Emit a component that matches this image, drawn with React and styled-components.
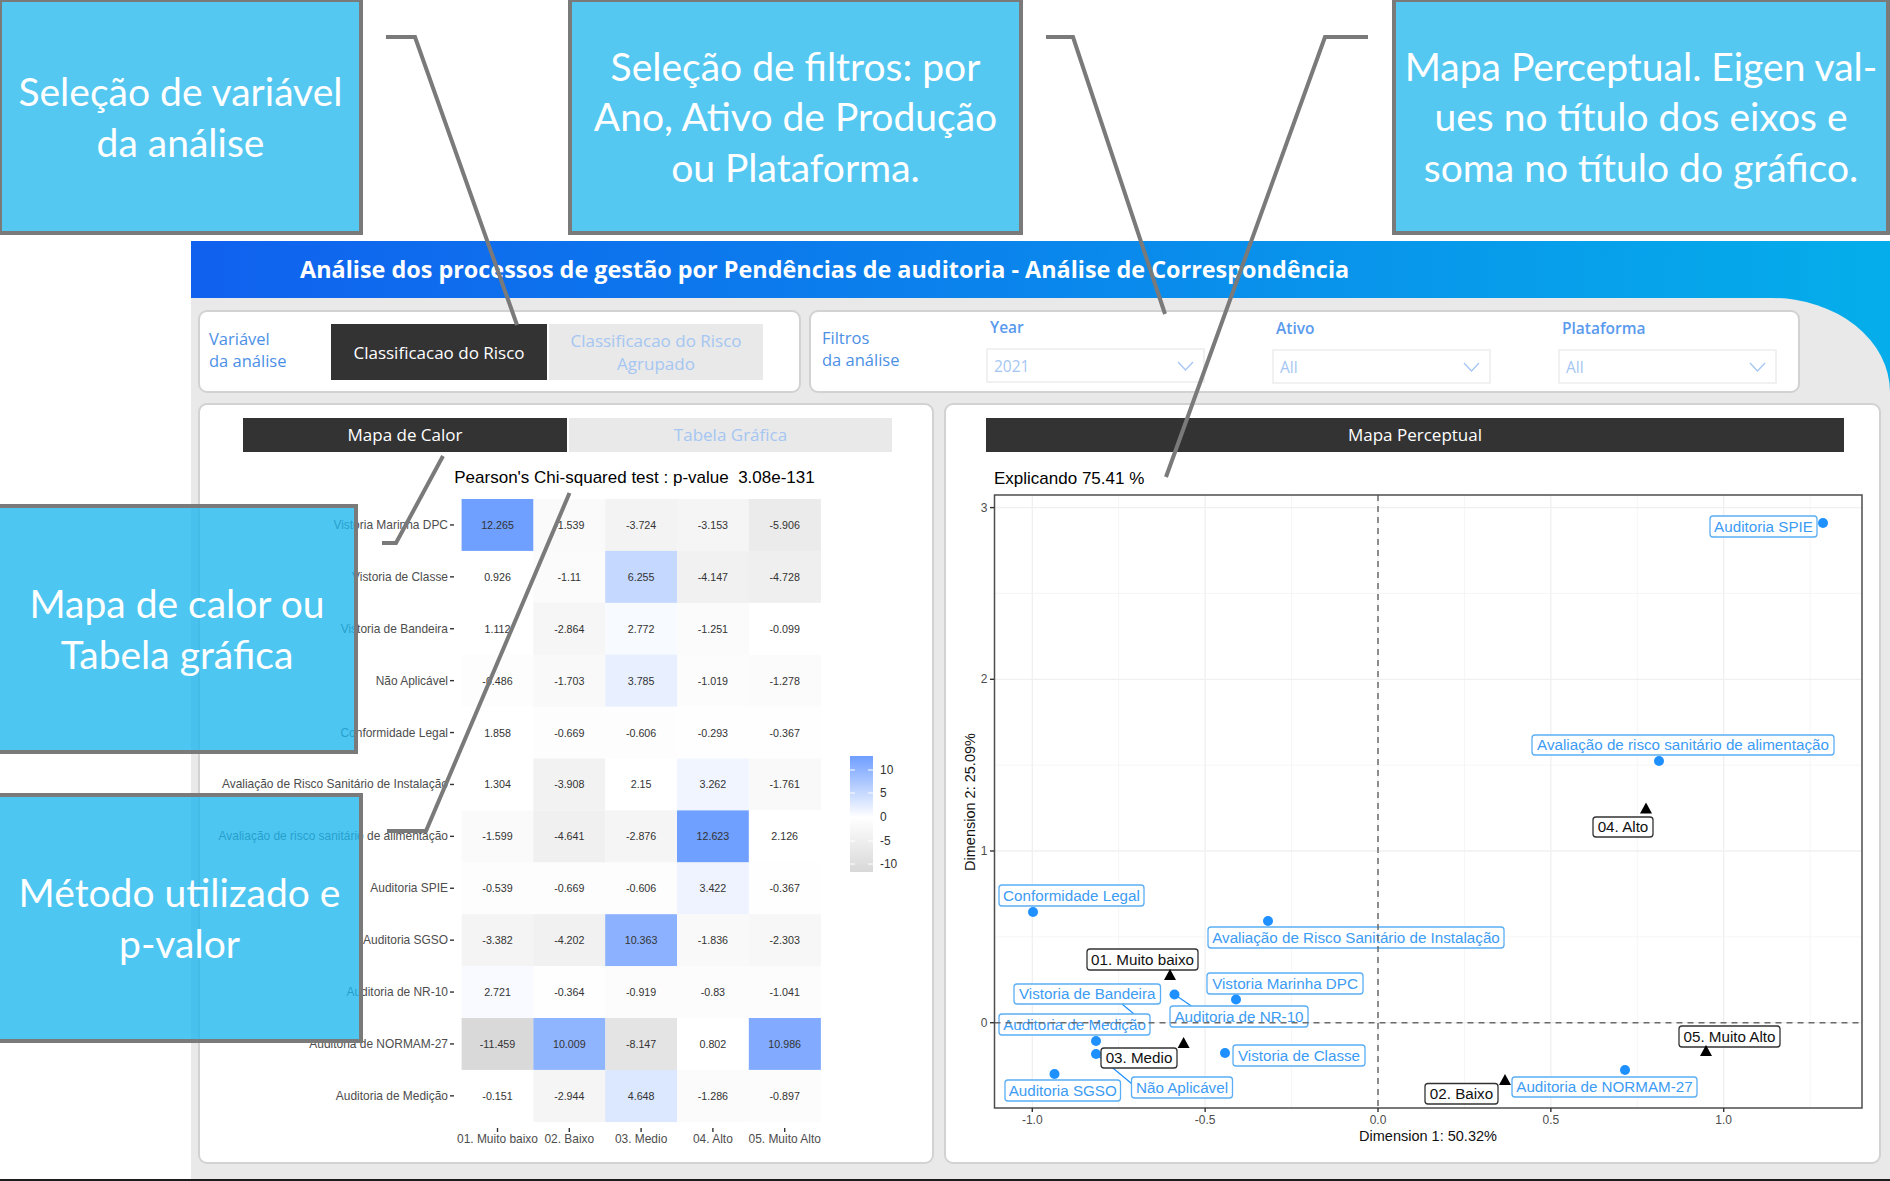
import React from "react";
import styled, { createGlobalStyle } from "styled-components";

const Global = createGlobalStyle`
  html, body { margin: 0; padding: 0; background: #fff; }
  * { box-sizing: border-box; }
  body { font-family: "Open Sans", "Liberation Sans", sans-serif; }
`;

const Page = styled.div`
  position: relative;
  width: 1890px;
  height: 1181px;
  overflow: hidden;
  display: flex;
  flex-direction: column;
  background: #fff;
  border-bottom: 2px solid #1c1c1c;
`;

const TopBand = styled.div`
  display: flex;
  align-items: flex-start;
  height: 241px;
  flex: none;
`;

const Callout = styled.div`
  width: ${(p) => p.$w}px;
  height: ${(p) => p.$h}px;
  margin-left: ${(p) => p.$ml || 0}px;
  margin-top: -2px;
  flex: none;
  display: flex;
  align-items: center;
  justify-content: center;
  text-align: center;
  background: #55c8f2;
  border: 4px solid #7a7a7a;
  color: #fff;
  font-family: Lato, "Liberation Sans", sans-serif;
  font-size: 39px;
  line-height: 50.6px;
`;

const FloatingCallout = styled(Callout)`
  position: absolute;
  z-index: 3;
  left: -4px;
  top: ${(p) => p.$top}px;
  margin: 0;
  background: rgba(28, 182, 238, 0.78);
`;

const Dashboard = styled.div`
  margin-left: 191px;
  flex: 1;
  display: flex;
  flex-direction: column;
  background: linear-gradient(90deg, #1061ee 0%, #0a86ec 50%, #05aeea 100%);
`;

const Header = styled.header`
  height: 57px;
  flex: none;
  display: flex;
  align-items: center;
  padding: 0 0 2px 109px;
  color: #fff;
  font-size: 23.4px;
  font-weight: 700;
`;

const Body = styled.main`
  flex: 1;
  background: #e9e9ea;
  border-top-right-radius: 118px 94px;
  padding: 12px 9px 0 7px;
  display: flex;
  flex-direction: column;
  gap: 10px;
`;

const Row = styled.div`
  display: flex;
  gap: ${(p) => p.$gap}px;
  height: ${(p) => p.$h}px;
  flex: none;
`;

const Card = styled.section`
  width: ${(p) => p.$w}px;
  flex: none;
  background: #fff;
  border: 2px solid #d2d2d2;
  border-radius: 9px;
`;

const ControlCard = styled(Card)`
  position: relative;
  display: flex;
  align-items: flex-start;
`;

const SideLabel = styled.div`
  width: ${(p) => p.$w}px;
  flex: none;
  margin-top: ${(p) => p.$mt}px;
  padding-left: ${(p) => p.$pl}px;
  color: #4c90e6;
  font-size: 16.5px;
  line-height: 22px;
`;

const Choice = styled.div`
  width: ${(p) => p.$w}px;
  height: 56px;
  flex: none;
  margin: 12px ${(p) => p.$mr || 0}px 0 0;
  display: flex;
  align-items: center;
  justify-content: center;
  text-align: center;
  font-size: 17px;
  line-height: 23px;
  background: ${(p) => (p.$active ? "#333" : "#e9e9e9")};
  color: ${(p) => (p.$active ? "#fff" : "#a5c6f2")};
`;

const Filters = styled.div`
  display: flex;
  gap: 67px;
`;

const Field = styled.div`
  width: 219px;
  margin-top: ${(p) => p.$mt}px;
`;

const FieldLabel = styled.div`
  padding-left: 4px;
  color: #5a9aee;
  font-size: 15.5px;
  font-weight: 600;
  line-height: 22px;
  height: 32px;
`;

const Select = styled.div`
  height: 35px;
  border: 2px solid #f1f1f1;
  padding: 0 9px 0 6px;
  display: flex;
  align-items: center;
  justify-content: space-between;
  color: #a5c6f2;
  font-size: 15.5px;
  svg { display: block; }
`;

const Panel = styled(Card)`
  padding: 13px 0 0 ${(p) => p.$pl}px;
`;

const TabRow = styled.div`
  display: flex;
  gap: 2px;
  height: 34px;
`;

const Tab = styled.div`
  width: ${(p) => p.$w}px;
  flex: none;
  display: flex;
  align-items: center;
  justify-content: center;
  padding-bottom: 2px;
  font-size: 17px;
  background: ${(p) => (p.$active ? "#333" : "#e9e9e9")};
  color: ${(p) => (p.$active ? "#fff" : "#a5c6f2")};
`;

const ChartFrame = styled.div`
  margin-left: ${(p) => -p.$pl}px;
  svg { display: block; }
`;

const Overlay = styled.svg`
  position: absolute;
  inset: 0;
  z-index: 2;
  pointer-events: none;
`;

const Connector = styled.polyline`
  fill: none;
  stroke: #7a7a7a;
  stroke-width: 4;
`;

const ChartText = styled.text`
  font-family: "Liberation Sans", Arial, sans-serif;
  font-size: ${(p) => p.$fs}px;
  fill: ${(p) => p.$c || "#4d4d4d"};
  text-anchor: ${(p) => p.$a || "middle"};
  white-space: pre;
`;

const Tick = styled.line`
  stroke: #333;
  stroke-width: 1.4;
`;

const GridLine = styled.line`
  stroke: #f0f0f0;
  stroke-width: ${(p) => (p.$minor ? 0.7 : 1.3)};
`;

const ZeroLine = styled.line`
  stroke: #6b6b6b;
  stroke-width: 1.5;
  stroke-dasharray: 6 5;
`;

const LabelBox = styled.rect`
  fill: #fff;
  rx: 3px;
  stroke: ${(p) => (p.$dark ? "#333" : "#5aaef5")};
  stroke-width: 1.3;
`;

const Dot = styled.circle`
  fill: #1e90ff;
`;

const Marker = styled.polygon`
  fill: #000;
`;

const Leader = styled.line`
  stroke: #1e90ff;
  stroke-width: 1.2;
`;

const PlotFrame = styled.rect`
  fill: none;
  stroke: #4d4d4d;
  stroke-width: 1.5;
`;

const rows = [
  ["Vistoria Marinha DPC", [12.265, -1.539, -3.724, -3.153, -5.906]],
  ["Vistoria de Classe", [0.926, -1.11, 6.255, -4.147, -4.728]],
  ["Vistoria de Bandeira", [1.112, -2.864, 2.772, -1.251, -0.099]],
  ["Não Aplicável", [-0.486, -1.703, 3.785, -1.019, -1.278]],
  ["Conformidade Legal", [1.858, -0.669, -0.606, -0.293, -0.367]],
  ["Avaliação de Risco Sanitário de Instalação", [1.304, -3.908, 2.15, 3.262, -1.761]],
  ["Avaliação de risco sanitário de alimentação", [-1.599, -4.641, -2.876, 12.623, 2.126]],
  ["Auditoria SPIE", [-0.539, -0.669, -0.606, 3.422, -0.367]],
  ["Auditoria SGSO", [-3.382, -4.202, 10.363, -1.836, -2.303]],
  ["Auditoria de NR-10", [2.721, -0.364, -0.919, -0.83, -1.041]],
  ["Auditoria de NORMAM-27", [-11.459, 10.009, -8.147, 0.802, 10.986]],
  ["Auditoria de Medição", [-0.151, -2.944, 4.648, -1.286, -0.897]],
];
const cols = ["01. Muito baixo", "02. Baixo", "03. Medio", "04. Alto", "05. Muito Alto"];

const mix = (a, b, t) => a.map((v, i) => Math.round(v + (b[i] - v) * t));
const heat = (v) => {
  const c =
    v >= 0
      ? mix([255, 255, 255], [111, 159, 255], Math.max(0, Math.min(1, (v - 2.2) / 10.1)))
      : mix([255, 255, 255], [217, 217, 217], Math.min(1, -v / 11.5));
  return `rgb(${c.join(",")})`;
};

const CX = 461.6;
const CY = 499;
const CW = 71.8;
const CH = 51.9;

function HeatChart() {
  return (
    <svg width="732" height="711" viewBox="200 452 732 711">
      <ChartText x={634.5} y={483} $fs={17} $c="#000">Pearson's Chi-squared test : p-value  3.08e-131</ChartText>
      {rows.map(([name, vals], r) => {
        const my = CY + CH * (r + 0.5);
        return (
          <g key={name}>
            <ChartText x={448} y={my + 4} $fs={11.95} $a="end">{name}</ChartText>
            <Tick x1={450} x2={454} y1={my} y2={my} />
            {vals.map((v, c) => (
              <g key={c}>
                <rect x={CX + CW * c} y={CY + CH * r} width={CW + 0.3} height={CH + 0.3} fill={heat(v)} />
                <ChartText x={CX + CW * (c + 0.5)} y={my + 4} $fs={10.7} $c="#333">{v}</ChartText>
              </g>
            ))}
          </g>
        );
      })}
      {cols.map((n, c) => (
        <g key={n}>
          <Tick x1={CX + CW * (c + 0.5)} x2={CX + CW * (c + 0.5)} y1={1128} y2={1132} />
          <ChartText x={CX + CW * (c + 0.5)} y={1143} $fs={11.95}>{n}</ChartText>
        </g>
      ))}
      <defs>
        <linearGradient id="legendFill" x1="0" x2="0" y1="0" y2="1">
          <stop offset="0" stopColor="#6f9eff" />
          <stop offset="0.53" stopColor="#ffffff" />
          <stop offset="1" stopColor="#d8d8d8" />
        </linearGradient>
      </defs>
      <rect x={850} y={756} width={23} height={116} fill="url(#legendFill)" />
      {[[770, "10"], [793, "5"], [817, "0"], [841, "-5"], [864, "-10"]].map(([y, t]) => (
        <g key={t}>
          <line x1={850} x2={855} y1={y} y2={y} stroke="#fff" />
          <line x1={868} x2={873} y1={y} y2={y} stroke="#fff" />
          <ChartText x={880} y={y + 4} $fs={11.95} $a="start" $c="#333">{t}</ChartText>
        </g>
      ))}
    </svg>
  );
}

const px = (v) => 1378 + 345.7 * v;
const py = (v) => 1022.7 - 171.7 * v;

const blueLabels = [
  ["Auditoria SPIE", 1710, 516, 107, 21],
  ["Avaliação de risco sanitário de alimentação", 1532, 735, 302, 20],
  ["Conformidade Legal", 999, 885, 145, 21],
  ["Avaliação de Risco Sanitário de Instalação", 1208, 927, 296, 21],
  ["Vistoria Marinha DPC", 1207, 973, 156, 21],
  ["Vistoria de Bandeira", 1014, 984, 146.5, 20],
  ["Auditoria de NR-10", 1170, 1006, 138, 21],
  ["Auditoria de Medição", 999, 1014, 151, 21],
  ["Vistoria de Classe", 1233, 1045, 132, 21],
  ["Auditoria SGSO", 1005, 1080, 115.5, 21],
  ["Não Aplicável", 1131.5, 1077, 101, 21],
  ["Auditoria de NORMAM-27", 1512, 1077, 185, 20],
];
const darkLabels = [
  ["04. Alto", 1593, 817, 60, 20],
  ["01. Muito baixo", 1087, 949, 111, 21],
  ["03. Medio", 1101, 1048, 76, 20],
  ["05. Muito Alto", 1679, 1026, 101, 21],
  ["02. Baixo", 1425, 1083.5, 73, 20.5],
];
const dots = [
  [1823, 523], [1659, 761], [1033, 912], [1268, 921], [1236, 999.5], [1174.5, 994.5],
  [1096, 1041], [1096, 1054], [1225, 1053], [1054.5, 1074], [1625, 1070],
];
const triangles = [[1646, 808.6], [1170, 975], [1183.6, 1043], [1706, 1051], [1505, 1080]];
const leaders = [
  [1174.5, 994.5, 1191.4, 1006],
  [1122, 1004, 1134, 1014],
  [1096, 1054, 1131.5, 1083.5],
];

function PerceptualChart() {
  const majorX = [-1, -0.5, 0, 0.5, 1];
  const minorX = [-0.75, -0.25, 0.25, 0.75, 1.25];
  const majorY = [0, 1, 2, 3];
  const minorY = [0.5, 1.5, 2.5];
  return (
    <svg width="933" height="711" viewBox="946 452 933 711">
      <ChartText x={994} y={484} $fs={17} $a="start" $c="#000">Explicando 75.41 %</ChartText>
      {minorX.map((v) => <GridLine key={v} $minor x1={px(v)} x2={px(v)} y1={495} y2={1108} />)}
      {minorY.map((v) => <GridLine key={v} $minor x1={994.5} x2={1862} y1={py(v)} y2={py(v)} />)}
      {majorX.map((v) => <GridLine key={v} x1={px(v)} x2={px(v)} y1={495} y2={1108} />)}
      {majorY.map((v) => <GridLine key={v} x1={994.5} x2={1862} y1={py(v)} y2={py(v)} />)}
      {leaders.map(([a, b, c, d]) => <Leader key={a + b} x1={a} y1={b} x2={c} y2={d} />)}
      {blueLabels.map(([t, x, y, w, h]) => (
        <g key={t}>
          <LabelBox x={x} y={y} width={w} height={h} />
          <ChartText x={x + w / 2} y={y + h / 2 + 5.2} $fs={15.2} $c="#3c9bf3">{t}</ChartText>
        </g>
      ))}
      {dots.map(([x, y]) => <Dot key={x + "-" + y} cx={x} cy={y} r={5} />)}
      {darkLabels.map(([t, x, y, w, h]) => (
        <g key={t}>
          <LabelBox $dark x={x} y={y} width={w} height={h} />
          <ChartText x={x + w / 2} y={y + h / 2 + 5.2} $fs={15.2} $c="#111">{t}</ChartText>
        </g>
      ))}
      {triangles.map(([x, y]) => <Marker key={x} points={`${x - 6},${y + 5} ${x + 6},${y + 5} ${x},${y - 6}`} />)}
      <ZeroLine x1={px(0)} x2={px(0)} y1={495} y2={1108} />
      <ZeroLine x1={994.5} x2={1862} y1={py(0)} y2={py(0)} />
      <PlotFrame x={994.5} y={495} width={867.5} height={613} />
      {majorX.map((v) => (
        <g key={v}>
          <Tick x1={px(v)} x2={px(v)} y1={1108} y2={1112} />
          <ChartText x={px(v)} y={1124} $fs={12}>{v.toFixed(1)}</ChartText>
        </g>
      ))}
      {majorY.map((v) => (
        <g key={v}>
          <Tick x1={990} x2={994} y1={py(v)} y2={py(v)} />
          <ChartText x={987.5} y={py(v) + 4} $fs={12} $a="end">{v}</ChartText>
        </g>
      ))}
      <ChartText x={1428} y={1141} $fs={14.5} $c="#111">Dimension 1: 50.32%</ChartText>
      <ChartText x={0} y={0} $fs={14.5} $c="#111" transform="translate(975 802) rotate(-90)">Dimension 2: 25.09%</ChartText>
    </svg>
  );
}

const Chevron = () => (
  <svg width="17" height="10" viewBox="0 0 17 10" aria-hidden="true">
    <polyline points="1,1 8.5,9 16,1" fill="none" stroke="#a5c6f2" strokeWidth="1.3" />
  </svg>
);

export default function App() {
  return (
    <>
      <Global />
      <Page>
        <TopBand>
          <Callout $w={365} $h={237} $ml={-2}>
            <span>Seleção de variável<br />da análise</span>
          </Callout>
          <Callout $w={455} $h={237} $ml={205}>
            <span>Seleção de filtros: por<br />Ano, Ativo de Produção<br />ou Plataforma.</span>
          </Callout>
          <Callout $w={498} $h={237} $ml={369}>
            <span>Mapa Perceptual. Eigen val-<br />ues no título dos eixos e<br />soma no título do gráfico.</span>
          </Callout>
        </TopBand>
        <Dashboard>
          <Header>Análise dos processos de gestão por Pendências de auditoria - Análise de Correspondência</Header>
          <Body>
            <Row $gap={8} $h={83}>
              <ControlCard $w={603}>
                <SideLabel $w={131} $mt={16} $pl={9}>Variável<br />da análise</SideLabel>
                <Choice $w={216} $mr={2} $active>Classificacao do Risco</Choice>
                <Choice $w={214}>Classificacao do Risco<br />Agrupado</Choice>
              </ControlCard>
              <ControlCard $w={991}>
                <SideLabel $w={175} $mt={15} $pl={11}>Filtros<br />da análise</SideLabel>
                <Filters>
                  <Field $mt={4}>
                    <FieldLabel>Year</FieldLabel>
                    <Select>2021<Chevron /></Select>
                  </Field>
                  <Field $mt={5}>
                    <FieldLabel>Ativo</FieldLabel>
                    <Select>All<Chevron /></Select>
                  </Field>
                  <Field $mt={5}>
                    <FieldLabel>Plataforma</FieldLabel>
                    <Select>All<Chevron /></Select>
                  </Field>
                </Filters>
              </ControlCard>
            </Row>
            <Row $gap={10} $h={761}>
              <Panel $w={736} $pl={43}>
                <TabRow>
                  <Tab $w={324} $active>Mapa de Calor</Tab>
                  <Tab $w={323}>Tabela Gráfica</Tab>
                </TabRow>
                <ChartFrame $pl={43}><HeatChart /></ChartFrame>
              </Panel>
              <Panel $w={937} $pl={40}>
                <TabRow>
                  <Tab $w={858} $active>Mapa Perceptual</Tab>
                </TabRow>
                <ChartFrame $pl={40}><PerceptualChart /></ChartFrame>
              </Panel>
            </Row>
          </Body>
        </Dashboard>
        <Overlay width="1890" height="1181" viewBox="0 0 1890 1181" aria-hidden="true">
          <Connector points="386,37 415,37 517,325" />
          <Connector points="1046,37 1073,37 1165,314" />
          <Connector points="1368,37 1325,37 1166,477" />
          <Connector points="382,543 396,543 443,456" />
          <Connector points="387,831 426,831 569.5,493" />
        </Overlay>
        <FloatingCallout $w={362} $h={250} $top={504}>
          <span>Mapa de calor ou<br />Tabela gráfica</span>
        </FloatingCallout>
        <FloatingCallout $w={367} $h={250} $top={793}>
          <span>Método utilizado e<br />p-valor</span>
        </FloatingCallout>
      </Page>
    </>
  );
}
